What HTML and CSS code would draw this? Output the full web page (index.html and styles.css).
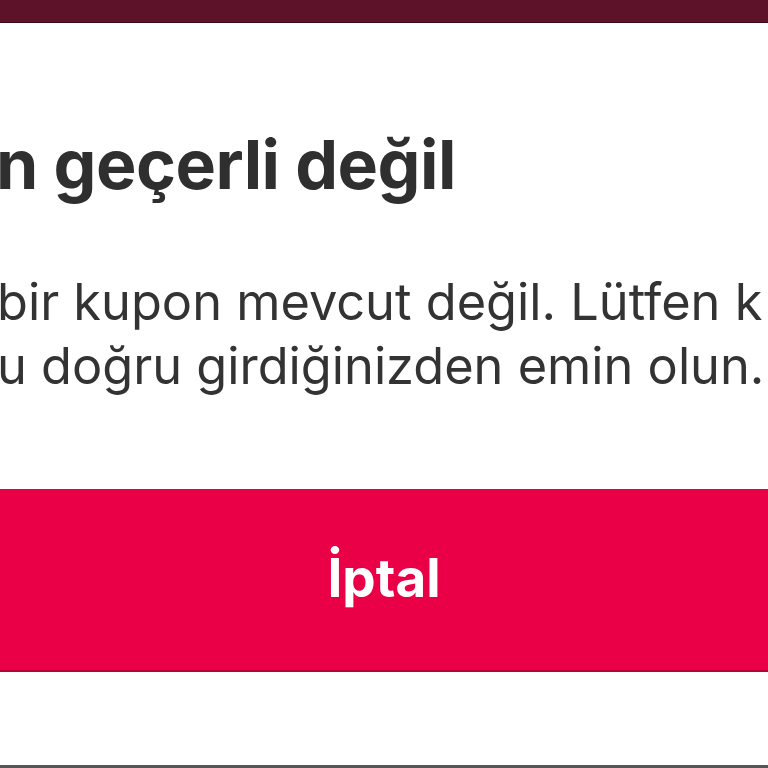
FILE: index.html
```html
<!DOCTYPE html>
<html lang="tr">
<head>
<meta charset="utf-8">
<link rel="stylesheet" href="styles.css">
</head>
<body>
<div class="topbar"></div>
<div class="sheet">
  <h1 class="title">n geçerli değil</h1>
  <p class="message"><span class="line">bir kupon mevcut değil. Lütfen k</span><span class="line">u doğru girdiğinizden emin olun.</span></p>
  <div class="actions">
    <button class="btn-cancel">İptal</button>
  </div>
</div>
<div class="bottombar"></div>
</body>
</html>
```
FILE: styles.css
```css
html, body {
  margin: 0;
  padding: 0;
  width: 768px;
  height: 768px;
  overflow: hidden;
  background: #ffffff;
  font-family: Inter, "Noto Sans", sans-serif;
}
.topbar {
  height: 22px;
  background: #5e1229;
  border-bottom: 1px solid #3e0a1a;
}
.sheet {
  display: flex;
  flex-direction: column;
  height: 742px;
}
.title {
  margin: 101px 0 0 -4px;
  font-size: 68px;
  line-height: 80px;
  font-weight: 700;
  color: #2f2f2f;
  white-space: nowrap;
  letter-spacing: -0.5px;
}
.message {
  margin: 66px 0 0 -3px;
  font-size: 50.5px;
  line-height: 64px;
  color: #333333;
  font-weight: 400;
}
.line {
  display: block;
  white-space: nowrap;
}
.actions {
  margin-top: 91px;
}
.btn-cancel {
  display: flex;
  align-items: center;
  justify-content: center;
  width: 100%;
  height: 183px;
  border: 0;
  border-bottom: 2px solid #b8003a;
  background: #ea0046;
  color: #ffffff;
  font-family: Inter, "Noto Sans", sans-serif;
  font-size: 53px;
  font-weight: 700;
  padding: 0 0 4px;
}
.bottombar {
  height: 3px;
  background: #555555;
}
```
